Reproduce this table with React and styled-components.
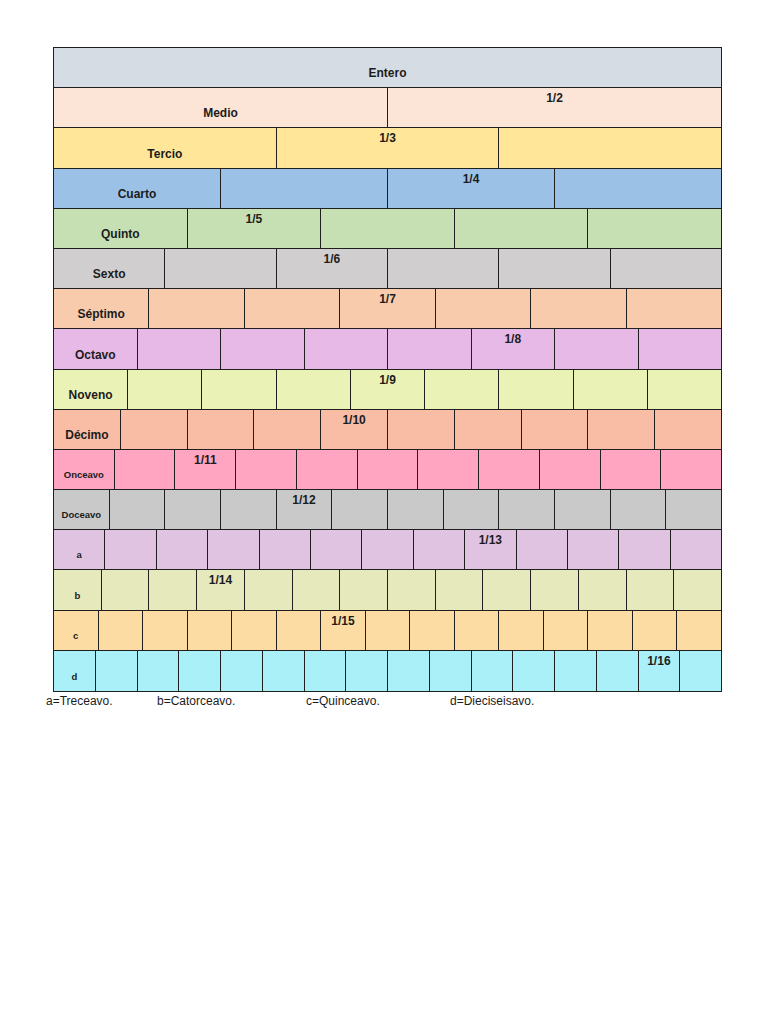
import styled, { createGlobalStyle } from "styled-components";

const GlobalStyle = createGlobalStyle`
  body {
    margin: 0;
    background: #ffffff;
    font-family: "Liberation Sans", Arial, sans-serif;
    color: #1c1c1c;
  }
`;

const Page = styled.div`
  width: 768px;
  height: 1024px;
  padding: 47px 0 0 53px;
  box-sizing: border-box;
`;

const Table = styled.div`
  width: 669px;
  display: flex;
  flex-direction: column;
  border: 1px solid #1f1f1f;
  box-sizing: border-box;
`;

const Row = styled.div`
  display: flex;
  height: 40.2px;
  background-color: ${(props) => props.$color};
  border-bottom: 1px solid #1f1f1f;
  box-sizing: border-box;

  &:last-child {
    border-bottom: none;
  }
`;

const Cell = styled.div`
  flex: 1 1 0;
  min-width: 0;
  display: flex;
  justify-content: center;
  align-items: ${(props) => (props.$top ? "flex-start" : "flex-end")};
  padding: ${(props) => (props.$top ? "3px 0 0" : "0 0 7px")};
  border-right: 1px solid #1f1f1f;
  box-sizing: border-box;
  font-weight: bold;
  font-size: ${(props) => (props.$small ? "9.5px" : "12px")};
  line-height: 14px;
  white-space: nowrap;

  &:last-child {
    border-right: none;
  }
`;

const Legend = styled.div`
  display: grid;
  grid-template-columns: 111px 149px 144px auto;
  margin: 1px 0 0 -7px;
  font-size: 12px;
  line-height: 16px;
`;

const rows = [
  { label: "Entero", n: 1, mark: -1, color: "#d6dce4" },
  { label: "Medio", n: 2, mark: 1, color: "#fce4d6" },
  { label: "Tercio", n: 3, mark: 1, color: "#ffe699" },
  { label: "Cuarto", n: 4, mark: 2, color: "#9bc2e6" },
  { label: "Quinto", n: 5, mark: 1, color: "#c6e0b4" },
  { label: "Sexto", n: 6, mark: 2, color: "#d0cece" },
  { label: "Séptimo", n: 7, mark: 3, color: "#f8cbad" },
  { label: "Octavo", n: 8, mark: 5, color: "#e6b9e6" },
  { label: "Noveno", n: 9, mark: 4, color: "#ebf2b6" },
  { label: "Décimo", n: 10, mark: 4, color: "#f8bda4" },
  { label: "Onceavo", n: 11, mark: 2, color: "#ffa4c1", small: true },
  { label: "Doceavo", n: 12, mark: 4, color: "#c9c9c9", small: true },
  { label: "a", n: 13, mark: 8, color: "#e0c3e0", small: true },
  { label: "b", n: 14, mark: 3, color: "#e6e9bc", small: true },
  { label: "c", n: 15, mark: 6, color: "#fddca4", small: true },
  { label: "d", n: 16, mark: 14, color: "#aaf0f9", small: true },
];

const legend = ["a=Treceavo.", "b=Catorceavo.", "c=Quinceavo.", "d=Dieciseisavo."];

const App = () => {
  return (
    <Page>
      <GlobalStyle />
      <Table>
        {rows.map((row) => (
          <Row key={row.n} $color={row.color}>
            {Array.from({ length: row.n }, (_, i) => {
              if (i === 0) {
                return (
                  <Cell key={i} $small={row.small}>
                    {row.label}
                  </Cell>
                );
              }
              if (i === row.mark) {
                return (
                  <Cell key={i} $top>
                    1/{row.n}
                  </Cell>
                );
              }
              return <Cell key={i} />;
            })}
          </Row>
        ))}
      </Table>
      <Legend>
        {legend.map((item) => (
          <span key={item}>{item}</span>
        ))}
      </Legend>
    </Page>
  );
};

export default App;
